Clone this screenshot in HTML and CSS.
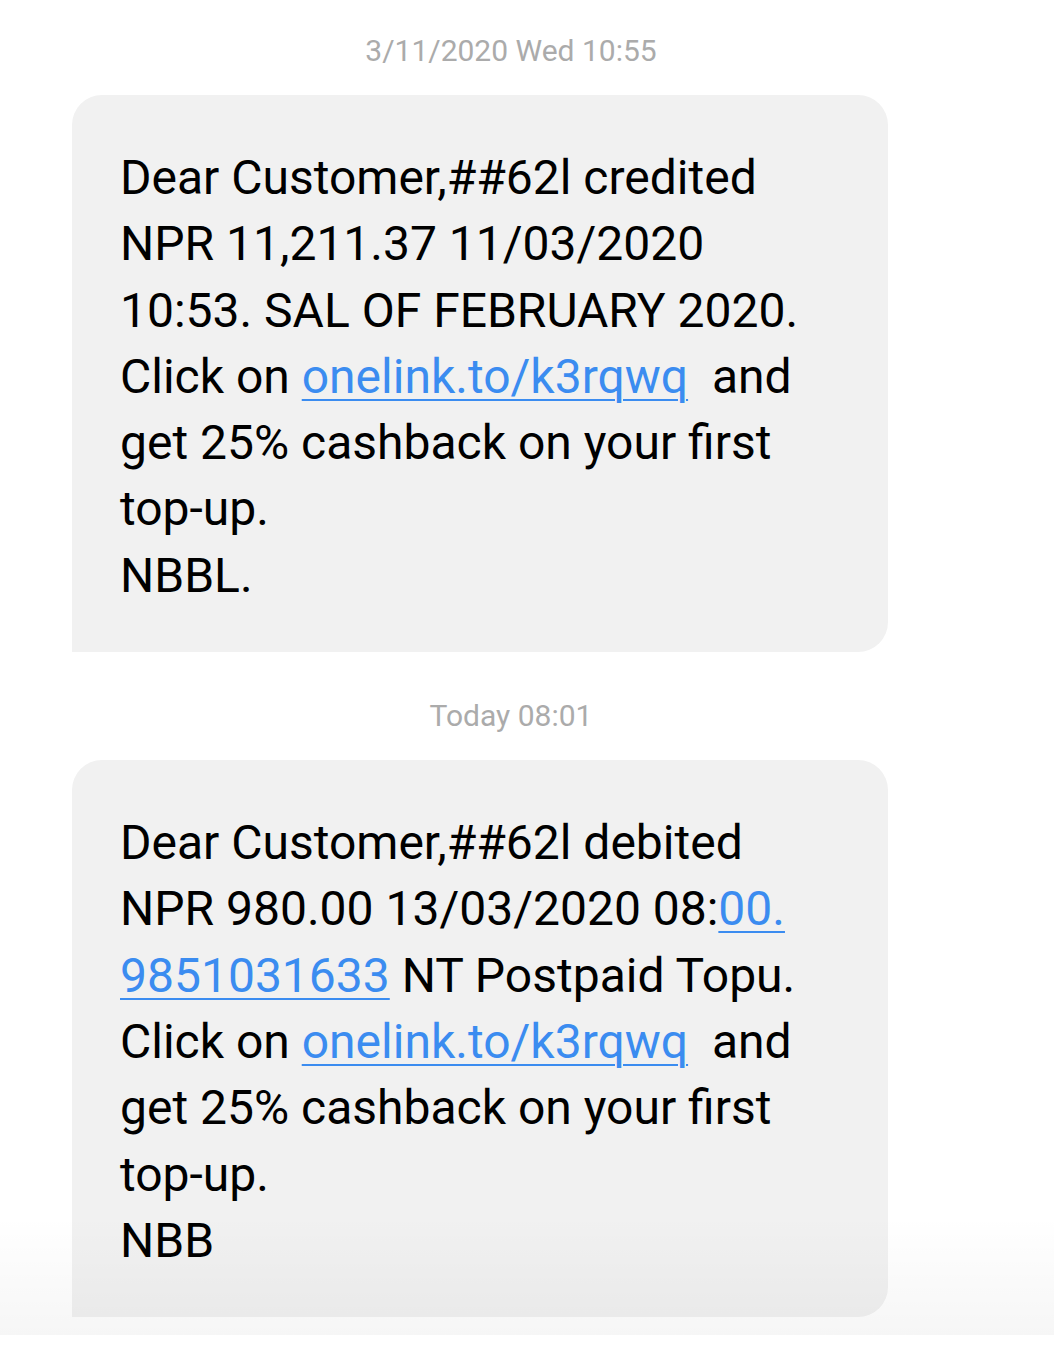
FILE: index.html
```html
<!DOCTYPE html>
<html>
<head>
<meta charset="utf-8">
<link rel="stylesheet" href="styles.css">
</head>
<body>
<div class="thread">
  <div class="stamp stamp-first">3/11/2020 Wed 10:55</div>
  <div class="bubble">
    <div class="line">Dear Customer,##62l credited</div>
    <div class="line">NPR 11,211.37 11/03/2020</div>
    <div class="line">10:53. SAL OF FEBRUARY 2020.</div>
    <div class="line">Click on <a class="link">onelink.to/k3rqwq</a>&nbsp; and</div>
    <div class="line">get 25% cashback on your first</div>
    <div class="line">top-up.</div>
    <div class="line">NBBL.</div>
  </div>
  <div class="stamp">Today 08:01</div>
  <div class="bubble">
    <div class="line">Dear Customer,##62l debited</div>
    <div class="line">NPR 980.00 13/03/2020 08:<a class="link">00.</a></div>
    <div class="line"><a class="link">9851031633</a> NT Postpaid Topu.</div>
    <div class="line">Click on <a class="link">onelink.to/k3rqwq</a>&nbsp; and</div>
    <div class="line">get 25% cashback on your first</div>
    <div class="line">top-up.</div>
    <div class="line">NBB</div>
  </div>
</div>
<div class="fade"></div>
</body>
</html>
```
FILE: styles.css
```css
html, body {
  margin: 0;
  padding: 0;
  background: #ffffff;
}
body {
  font-family: Roboto, "Noto Sans", sans-serif;
  width: 1054px;
  height: 1346px;
  overflow: hidden;
  position: relative;
}
.thread {
  display: flex;
  flex-direction: column;
  padding-left: 72px;
}
.stamp {
  width: 878px;
  text-align: center;
  color: #ababab;
  font-size: 30px;
  line-height: 40px;
  margin: 44px 0 24px;
}
.stamp-first {
  margin: 31px 0 24px;
}
.bubble {
  width: 816px;
  box-sizing: border-box;
  background: #f1f1f1;
  border-radius: 30px 30px 30px 0;
  padding: 50px 30px 43px 48px;
  color: #000;
  font-size: 48px;
  line-height: 66.3px;
}
.line {
  white-space: nowrap;
}
.link {
  color: #3b8cf0;
  text-decoration: underline;
  text-decoration-thickness: 2px;
  text-underline-offset: 6px;
}
.fade {
  position: absolute;
  left: 0;
  right: 0;
  top: 1215px;
  height: 120px;
  background: linear-gradient(to bottom, rgba(0,0,0,0), rgba(0,0,0,0.035));
  pointer-events: none;
}
```
